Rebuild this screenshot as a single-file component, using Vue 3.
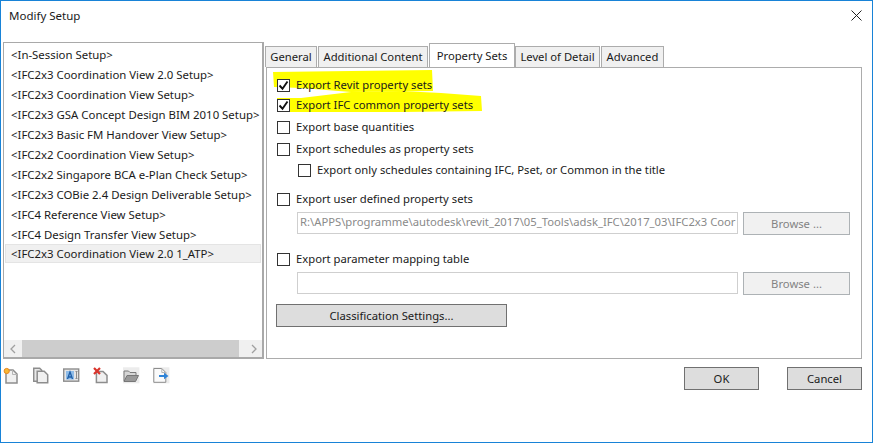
<script setup>
const setups = [
  '<In-Session Setup>',
  '<IFC2x3 Coordination View 2.0 Setup>',
  '<IFC2x3 Coordination View Setup>',
  '<IFC2x3 GSA Concept Design BIM 2010 Setup>',
  '<IFC2x3 Basic FM Handover View Setup>',
  '<IFC2x2 Coordination View Setup>',
  '<IFC2x2 Singapore BCA e-Plan Check Setup>',
  '<IFC2x3 COBie 2.4 Design Deliverable Setup>',
  '<IFC4 Reference View Setup>',
  '<IFC4 Design Transfer View Setup>',
  '<IFC2x3 Coordination View 2.0 1_ATP>'
]
const tabs = ['General', 'Additional Content', 'Property Sets', 'Level of Detail', 'Advanced']
</script>

<template>
  <div class="dialog">
    <header class="title">
      <span>Modify Setup</span>
      <svg class="close" width="11" height="11" viewBox="0 0 11 11"><path d="M.5.5l10 10M10.500.5l-10 10" stroke="#222" fill="none"/></svg>
    </header>
    <main class="body">
      <aside class="list">
        <div class="items">
          <div v-for="(s, i) in setups" :key="s" class="item" :class="{ sel: i === 10 }">{{ s }}</div>
        </div>
        <div class="hscroll">
          <span class="arrow first"><svg width="6" height="10" viewBox="0 0 6 10"><path d="M5 1L1 5l4 4" stroke="#a0a0a0" stroke-width="1.300" fill="none"/></svg></span>
          <span class="thumb"></span>
          <span class="track"></span>
          <span class="arrow"><svg width="6" height="10" viewBox="0 0 6 10"><path d="M1 1l4 4-4 4" stroke="#a0a0a0" stroke-width="1.300" fill="none"/></svg></span>
        </div>
      </aside>
      <section class="tabs-wrap">
        <nav class="tabs">
          <span v-for="(t, i) in tabs" :key="t" class="tab" :class="{ active: i === 2 }">{{ t }}</span>
        </nav>
        <div class="panel">
          <svg class="marker" width="230" height="60" viewBox="265 67 230 60">
            <path d="M272 72L350 71 431 70 432 91 350 92 300 88 273 87Z" fill="#ffff00"/>
            <path d="M276 98L300 98 350 92 400 91 440 93 480 96 481 111 400 112 276 112Z" fill="#ffff00"/>
          </svg>
          <label class="row r1"><span class="cb"><svg width="11" height="11" viewBox="0 0 11 11"><path d="M1.500 5.500l3 3.200 5-7.200" stroke="#111" stroke-width="1.900" fill="none"/></svg></span>Export Revit property sets</label>
          <label class="row r2"><span class="cb"><svg width="11" height="11" viewBox="0 0 11 11"><path d="M1.500 5.500l3 3.200 5-7.200" stroke="#111" stroke-width="1.900" fill="none"/></svg></span>Export IFC common property sets</label>
          <label class="row r3"><span class="cb"></span>Export base quantities</label>
          <label class="row r4"><span class="cb"></span>Export schedules as property sets</label>
          <label class="row r5"><span class="cb"></span>Export only schedules containing IFC, Pset, or Common in the title</label>
          <label class="row r6"><span class="cb"></span>Export user defined property sets</label>
          <div class="field">
            <div class="input">R:\APPS\programme\autodesk\revit_2017\05_Tools\adsk_IFC\2017_03\IFC2x3 Coor</div>
            <div class="browse">Browse ...</div>
          </div>
          <label class="row r7"><span class="cb"></span>Export parameter mapping table</label>
          <div class="field">
            <div class="input"></div>
            <div class="browse">Browse ...</div>
          </div>
          <div class="btn classify">Classification Settings...</div>
        </div>
      </section>
    </main>
    <footer class="foot">
      <div class="tools">
        <svg width="20" height="20" viewBox="0 0 20 20"><path d="M3 4h7l4 4v9H3z" fill="#f0f0f0" stroke="#8d8d8d" stroke-width="1.500"/><path d="M9.500 4v4.500H14" fill="none" stroke="#b5b5b5"/><circle cx="3.700" cy="5" r="2.600" fill="#f7b733" stroke="#e8871e"/></svg>
        <svg width="20" height="20" viewBox="0 0 20 20"><path d="M.7 2.200h6l2 2v11h-8z" fill="#e8e8e8" stroke="#8d8d8d" stroke-width="1.500"/><path d="M4.200 5.200h7l3.500 3.500v8.100H4.200z" fill="#f0f0f0" stroke="#8d8d8d" stroke-width="1.500"/></svg>
        <svg width="20" height="20" viewBox="0 0 20 20"><rect x=".7" y="3" width="15" height="12.200" fill="#e6e6e6" stroke="#8d8d8d" stroke-width="1.400"/><rect x="3" y="5" width="8" height="8.500" fill="#8fbce8"/><path d="M4.500 13L7 6l2.500 7M5.500 11h3" stroke="#1f5fa8" stroke-width="1.300" fill="none"/><path d="M12.500 5.500h2M13.500 5.500v7M12.500 12.500h2" stroke="#8d8d8d" fill="none"/></svg>
        <svg width="20" height="20" viewBox="0 0 20 20"><path d="M3.400 5.400h6.600l4 4v7.200H3.400z" fill="#f0f0f0" stroke="#8d8d8d" stroke-width="1.500"/><path d="M1 2l6 6M7 2L1 8" stroke="#d9342b" stroke-width="2.200"/></svg>
        <svg width="20" height="20" viewBox="0 0 20 20"><rect y="1.300" width="16.400" height="16" fill="#ececec"/><path d="M1 15V5h4.500L7 6.500h6V9" fill="#d6d6d6" stroke="#7a7a7a"/><path d="M1 15.500l3-6h11.500l-3 6z" fill="#999" stroke="#777"/></svg>
        <svg width="20" height="20" viewBox="0 0 20 20"><rect y="1.300" width="16.400" height="16" fill="#ececec"/><path d="M.8 2.500h8l4 4v9.800h-12z" fill="#fafafa" stroke="#8d8d8d"/><path d="M8.800 2.500v4h4" fill="none" stroke="#b5b5b5"/><path d="M6 9h5V6.700l4.500 3.300-4.500 3.300V11H6z" fill="#2f84d8"/></svg>
      </div>
      <div class="actions">
        <div class="btn ok">OK</div>
        <div class="btn cancel">Cancel</div>
      </div>
    </footer>
  </div>
</template>

<style>
html, body { margin: 0; background: #fff; }
</style>

<style scoped>
.dialog { box-sizing: border-box; width: 873px; height: 443px; border: 1px solid #1883d7; background: #fff; color: #1a1a1a; font: 11.25px/16px "Noto Sans", sans-serif; display: flex; flex-direction: column; overflow: hidden; }
.title { height: 41px; display: flex; justify-content: space-between; padding: 7px 10px 0 8px; box-sizing: border-box; flex: none; font-size: 11.5px; }
.close { margin-top: 2px; }
.body { display: flex; height: 317px; flex: none; padding: 0 10px 0 2px; }
.list { box-sizing: border-box; width: 261px; height: 317px; border: 1px solid #a9a9a9; border-width: 1px 2px 2px 1px; display: flex; flex-direction: column; flex: none; padding-top: 2px; font-size: 11.4px; }
.items { flex: 1; padding: 0 1px; overflow: hidden; }
.item { height: 20px; line-height: 19px; padding: 0 6px; white-space: nowrap; box-sizing: border-box; }
.sel { background: #f0f0f0; border: 1px solid #e4e4e4; height: 19px; line-height: 18px; padding: 0 5px; margin-top: -1px; }
.hscroll { display: flex; height: 17px; flex: none; }
.arrow { width: 17px; background: #f0f0f0; display: flex; align-items: center; justify-content: center; flex: none; }
.arrow.first { width: 18px; }
.thumb { width: 217px; background: #cdcdcd; flex: none; }
.track { flex: 1; background: #f0f0f0; }
.tabs-wrap { flex: 1; margin-left: 2px; display: flex; flex-direction: column; min-width: 0; }
.tabs { display: flex; height: 25px; padding: 3px 0 0; margin-left: -1px; box-sizing: border-box; flex: none; }
.tab { box-sizing: border-box; height: 21px; text-align: center; line-height: 20px; background: #f0f0f0; border: 1px solid #acacac; border-bottom: 0; margin-right: 1px; white-space: nowrap; margin-top: 1px; flex: none; }
.tab:nth-child(1) { width: 52px; }
.tab:nth-child(2) { width: 110px; }
.tab:nth-child(3) { width: 86px; }
.tab:nth-child(4) { width: 85px; }
.tab:nth-child(5) { width: 63px; }
.tab.active { background: #fff; height: 24px; margin-top: -2px; line-height: 20px; position: relative; z-index: 1; margin-right: 0; padding-top: 2px; }
.panel { box-sizing: border-box; flex: 1; border: 1px solid #acacac; display: flex; flex-direction: column; padding: 0 0 0 10px; position: relative; z-index: 0; }
.marker { position: absolute; left: -1px; top: -1px; z-index: -1; }
.row { display: flex; align-items: center; height: 16px; gap: 6px; white-space: nowrap; }
.r1 { margin-top: 9px; }
.r2 { margin-top: 4px; }
.r3 { margin-top: 6px; }
.r4 { margin-top: 6px; }
.r5 { margin-top: 5px; padding-left: 21px; }
.r6 { margin-top: 13px; }
.r7 { margin-top: 17px; }
.cb { box-sizing: border-box; width: 13px; height: 13px; border: 1px solid #333; background: #fff; flex: none; display: flex; align-items: center; justify-content: center; }
.field { display: flex; gap: 5px; margin: 5px 0 0 20px; height: 22px; flex: none; }
.input { box-sizing: border-box; width: 441px; height: 22px; border: 1px solid #cfcfcf; color: #8a8a8a; padding: 0 2px; line-height: 18px; white-space: nowrap; overflow: hidden; flex: none; }
.browse { box-sizing: border-box; width: 107px; height: 23px; background: #f1f1f1; border: 1px solid #adb2b5; color: #838383; display: flex; align-items: center; justify-content: center; flex: none; }
.btn { box-sizing: border-box; background: #dddddd; border: 1px solid #707070; display: flex; align-items: center; justify-content: center; height: 23px; }
.classify { width: 231px; margin-top: 10px; margin-left: -1px; }
.foot { display: flex; justify-content: space-between; padding: 7px 10px 0 2px; }
.tools { display: flex; gap: 10px; }
.actions { display: flex; gap: 28px; padding-top: 1px; }
.ok, .cancel { width: 75px; }
</style>
